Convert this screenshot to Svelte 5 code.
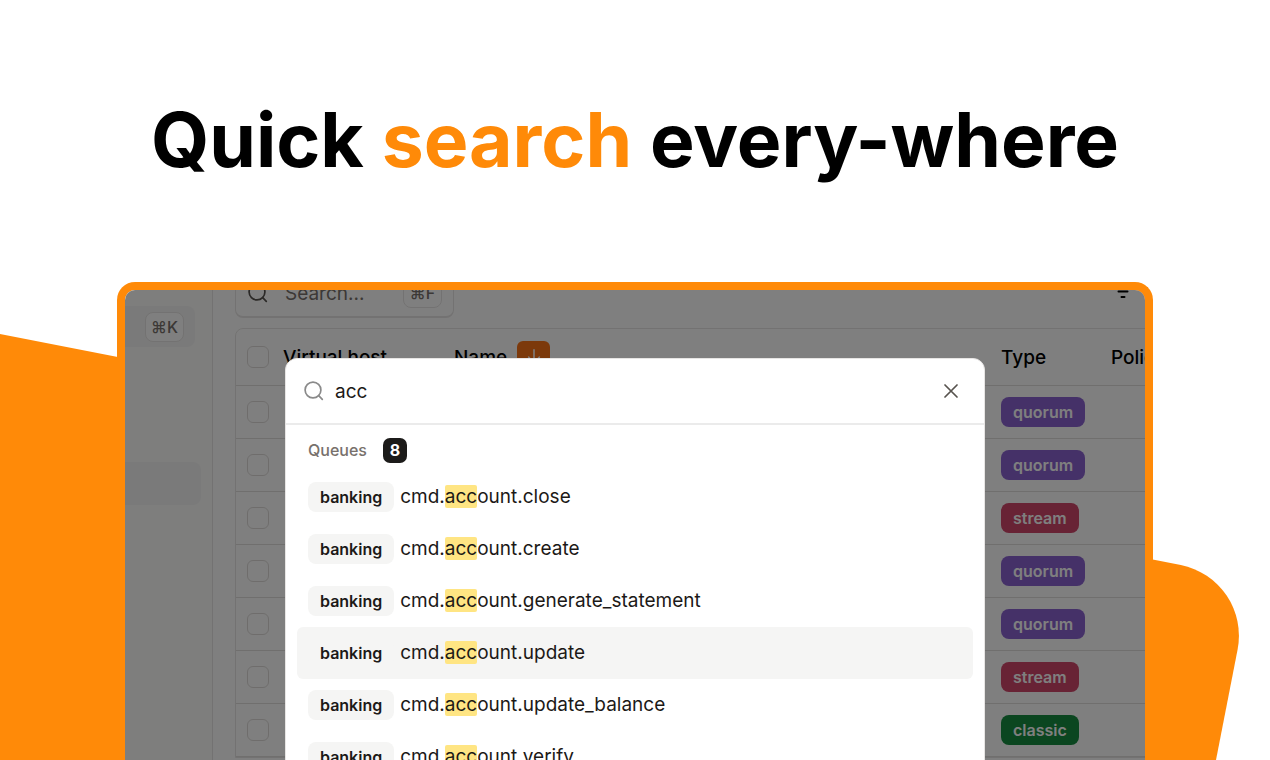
<script>
  let query = $state('acc');
  const results = [
    'cmd.account.close',
    'cmd.account.create',
    'cmd.account.generate_statement',
    'cmd.account.update',
    'cmd.account.update_balance',
    'cmd.account.verify'
  ];
  const active = 3;
  const rows = ['quorum', 'quorum', 'stream', 'quorum', 'quorum', 'stream', 'classic'];

  function split(name) {
    const at = query ? name.indexOf(query) : -1;
    if (at < 0) return [name, '', ''];
    return [name.slice(0, at), query, name.slice(at + query.length)];
  }
</script>

{#snippet magnifier()}
  <svg class="magnifier" viewBox="0 0 20 20" aria-hidden="true">
    <circle cx="9" cy="9" r="7.9" />
    <path d="M14.7 14.7 18.3 18.3" />
  </svg>
{/snippet}

<div class="page">
  <svg class="shape" viewBox="0 0 1270 760" preserveAspectRatio="xMidYMid slice" aria-hidden="true">
    <path d="M0 334 L1180.8 565.1 A72 72 0 0 1 1237.6 649.5 L1216 760 H0 Z" fill="#ff8a08" />
  </svg>

  <h1>Quick <em>search</em> every-where</h1>

  <div class="frame">
    <div class="app">
      <aside>
        <button class="jump" aria-label="Jump to"><kbd>⌘K</kbd></button>
        <div class="nav-active"></div>
      </aside>
      <main>
        <div class="toolbar">
          <label class="filter">
            {@render magnifier()}
            <input type="text" placeholder="Search..." aria-label="Search queues" />
            <kbd>⌘F</kbd>
          </label>
          <button class="filters" aria-label="Filters">
            <svg viewBox="0 0 22 20" aria-hidden="true"><path d="M2 4H20M6.500 9.500H15.500M9.500 15H12.500" /></svg>
          </button>
        </div>
        <div class="card">
          <table>
            <colgroup>
              <col class="c-check" /><col class="c-host" /><col /><col class="c-type" /><col class="c-policy" />
            </colgroup>
            <thead>
              <tr>
                <th><input type="checkbox" aria-label="Select all" /></th>
                <th>Virtual host</th>
                <th>
                  <span class="sorted">Name
                    <button class="sort" aria-label="Sort by name">
                      <svg viewBox="0 0 20 20" aria-hidden="true"><path d="M10 2V17M4 10 10 17 16 10" /></svg>
                    </button>
                  </span>
                </th>
                <th>Type</th>
                <th>Policies</th>
              </tr>
            </thead>
            <tbody>
              {#each rows as type, i}
                <tr>
                  <td><input type="checkbox" aria-label={`Select row ${i + 1}`} /></td>
                  <td></td>
                  <td></td>
                  <td><span class="pill {type}">{type}</span></td>
                  <td></td>
                </tr>
              {/each}
            </tbody>
          </table>
        </div>
      </main>
    </div>

    <div class="backdrop"></div>

    <div class="dialog" role="dialog" aria-label="Quick search">
      <div class="query">
        {@render magnifier()}
        <input type="text" bind:value={query} aria-label="Quick search" />
        <button class="close" aria-label="Close">
          <svg viewBox="0 0 14 14" aria-hidden="true"><path d="M1 1 13 13M13 1 1 13" /></svg>
        </button>
      </div>
      <div class="group">Queues <span class="count">8</span></div>
      <ul>
        {#each results as name, i}
          {@const parts = split(name)}
          <li>
            <button class="item" class:active={i === active}>
              <span class="tag">banking</span>
              <span class="name">{parts[0]}<mark>{parts[1]}</mark>{parts[2]}</span>
            </button>
          </li>
        {/each}
      </ul>
    </div>
  </div>
</div>

<style>
  :global(body) {
    margin: 0;
    background: #fff;
  }
  .page,
  .page * {
    box-sizing: border-box;
  }
  .page {
    position: relative;
    display: flex;
    flex-direction: column;
    height: 100vh;
    overflow: hidden;
    font-family: Inter, 'Liberation Sans', sans-serif;
    font-size: 19px;
    color: #1c1917;
  }
  button,
  input,
  kbd {
    font: inherit;
    color: inherit;
    margin: 0;
    padding: 0;
    border: 0;
    background: none;
  }
  svg {
    display: block;
    fill: none;
    stroke: currentColor;
    stroke-width: 1.7;
    stroke-linecap: round;
    stroke-linejoin: round;
  }
  .shape {
    position: absolute;
    inset: 0;
    width: 100%;
    height: 100%;
    stroke: none;
  }
  h1 {
    position: relative;
    flex: none;
    margin: 0;
    height: 282px;
    line-height: 280px;
    text-align: center;
    white-space: nowrap;
    font-size: 75px;
    font-weight: 700;
    color: #000;
  }
  h1 em {
    font-style: normal;
    color: #ff8a08;
  }
  .frame {
    position: relative;
    flex: 1;
    min-height: 0;
    margin: 0 117px;
    border: 8px solid #ff8a08;
    border-bottom: 0;
    border-radius: 18px 18px 0 0;
    background: #fff;
    overflow: hidden;
  }
  .app {
    display: flex;
    height: 100%;
  }
  aside {
    flex: none;
    width: 88px;
    padding-top: 16px;
    background: #fcfcfb;
    border-right: 1px solid #e7e5e4;
  }
  .jump {
    display: flex;
    align-items: center;
    justify-content: flex-end;
    width: 70px;
    height: 41px;
    padding-right: 11px;
    border-radius: 0 8px 8px 0;
    background: #f5f5f4;
  }
  kbd {
    display: flex;
    align-items: center;
    justify-content: center;
    width: 39px;
    height: 30px;
    border: 1px solid #e7e5e4;
    border-radius: 8px;
    background: #fff;
    color: #78716c;
    font-size: 16px;
    font-weight: 500;
  }
  .nav-active {
    width: 76px;
    height: 43px;
    margin-top: 115px;
    border-radius: 0 8px 8px 0;
    background: #f5f5f4;
  }
  main {
    flex: 1;
    min-width: 0;
    padding-left: 22px;
    overflow: hidden;
  }
  .toolbar {
    display: flex;
    align-items: flex-end;
    justify-content: space-between;
    height: 28px;
    padding-right: 11px;
  }
  .filter {
    display: flex;
    align-items: center;
    width: 219px;
    height: 49px;
    padding: 0 11px 0 12px;
    border: 1px solid #e7e5e4;
    border-bottom-width: 2px;
    border-radius: 8px;
    color: #57534e;
  }
  .filter input {
    flex: 1;
    min-width: 0;
    margin-left: 17px;
  }
  .filter input::placeholder {
    color: #78716c;
    opacity: 1;
  }
  .filters {
    padding-bottom: 16px;
    color: #000;
  }
  .filters svg {
    width: 22px;
    height: 20px;
    stroke-width: 2;
  }
  .magnifier {
    flex: none;
    width: 20px;
    height: 20px;
  }
  .card {
    width: calc(100% + 87px);
    margin-top: 10px;
    border: 1px solid #e7e5e4;
    border-radius: 8px 8px 0 0;
  }
  table {
    width: 100%;
    table-layout: fixed;
    border-collapse: separate;
    border-spacing: 0;
  }
  .c-check {
    width: 47px;
  }
  .c-host {
    width: 171px;
  }
  .c-type {
    width: 110px;
  }
  .c-policy {
    width: 120px;
  }
  th,
  td {
    height: 53px;
    padding: 0;
    border-bottom: 1px solid #e0dedd;
    text-align: left;
    vertical-align: middle;
  }
  th {
    height: 57px;
    font-weight: 500;
    color: #000;
  }
  th:first-child,
  td:first-child {
    padding-left: 11px;
  }
  input[type='checkbox'] {
    appearance: none;
    display: block;
    width: 22px;
    height: 22px;
    border: 1px solid #dedbd9;
    border-radius: 6px;
  }
  .sorted {
    display: flex;
    align-items: center;
    gap: 10px;
  }
  .sort {
    display: flex;
    align-items: center;
    justify-content: center;
    width: 33px;
    height: 33px;
    border-radius: 6px;
    background: #f97316;
    color: #fff;
  }
  .sort svg {
    width: 18px;
    height: 18px;
  }
  .pill {
    display: inline-flex;
    align-items: center;
    height: 30px;
    padding: 0 12px;
    border-radius: 8px;
    font-size: 16px;
    font-weight: 600;
    color: #fff;
    vertical-align: middle;
  }
  .quorum {
    background: #8b63d0;
  }
  .stream {
    background: #d0466a;
  }
  .classic {
    background: #168c40;
  }
  .backdrop {
    position: absolute;
    inset: 0;
    background: rgba(0, 0, 0, 0.5);
  }
  .dialog {
    position: absolute;
    top: 68px;
    left: calc(50% - 350px);
    width: 700px;
    height: 560px;
    border: 1px solid #e7e5e4;
    border-radius: 12px;
    background: #fff;
  }
  .query {
    display: flex;
    align-items: center;
    height: 66px;
    padding: 0 26px 0 18px;
    border-bottom: 2px solid #ebebeb;
  }
  .query .magnifier {
    color: #8a8a8a;
  }
  .query input {
    flex: 1;
    min-width: 0;
    margin-left: 11px;
    outline: 0;
  }
  .close svg {
    width: 14px;
    height: 14px;
    color: #57534e;
  }
  .group {
    display: flex;
    align-items: center;
    gap: 16px;
    height: 46px;
    padding: 4px 0 0 22px;
    font-size: 16px;
    font-weight: 500;
    color: #78716c;
  }
  .count {
    display: flex;
    align-items: center;
    justify-content: center;
    width: 24px;
    height: 25px;
    border-radius: 7px;
    background: #1c1b1a;
    color: #fff;
    font-weight: 700;
  }
  ul {
    list-style: none;
    margin: 0;
    padding: 0 11px;
  }
  .item {
    display: flex;
    align-items: center;
    gap: 6px;
    width: 100%;
    height: 52px;
    padding: 0 11px;
    border-radius: 6px;
  }
  .item.active,
  .tag {
    background: #f5f5f4;
  }
  .tag {
    display: flex;
    align-items: center;
    height: 30px;
    padding: 0 12px;
    border-radius: 8px;
    font-size: 16px;
    font-weight: 600;
  }
  .name {
    line-height: 24px;
  }
  mark {
    border-radius: 2px;
    background: #ffe583;
    color: inherit;
  }
</style>
